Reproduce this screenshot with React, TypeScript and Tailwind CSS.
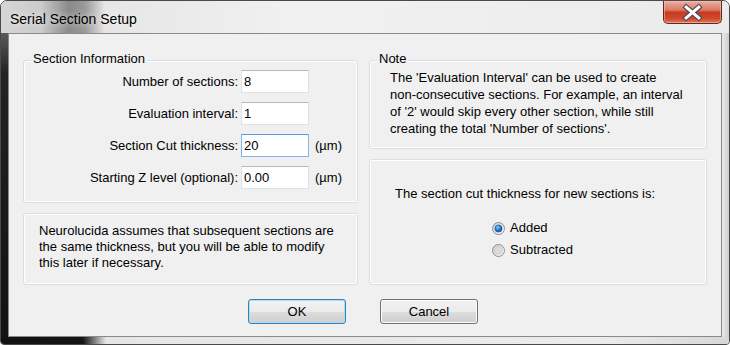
import type { ReactNode } from 'react';

function Group({ label, className, children }: { label?: string; className?: string; children?: ReactNode }) {
  return (
    <div className={`relative rounded-[3px] border border-[#d5dfe5] shadow-[inset_0_0_0_1px_#ffffff] ${className ?? ''}`}>
      {label && (
        <span className="absolute left-[7px] top-[-10px] bg-[#f0f0f0] px-[2px] leading-[15px]">{label}</span>
      )}
      {children}
    </div>
  );
}

function Field({ label, value, focused, unit }: { label: string; value: string; focused?: boolean; unit?: boolean }) {
  return (
    <div className="flex h-[23px] items-center">
      <span className="w-[214px] text-right leading-[15px]">{label}</span>
      <div
        className={`ml-[3px] flex h-[23px] w-[68px] items-center bg-white pl-[2px] ${
          focused ? 'border border-[#7eb4ea] border-t-[#569de5]' : 'border border-[#dde2e8] border-t-[#b5b9bf]'
        }`}
      >
        {value}
      </div>
      {unit && <span className="ml-[6px]">(µm)</span>}
    </div>
  );
}

function Radio({ checked, label }: { checked?: boolean; label: string }) {
  return (
    <div className="flex h-[22px] items-center gap-[5px]">
      <svg width="13" height="13" viewBox="0 0 13 13">
        <defs>
          <linearGradient id={`rb-${label}`} x1="0" y1="0" x2="1" y2="1">
            <stop offset="0" stopColor="#c9c9c9" />
            <stop offset="1" stopColor="#ffffff" />
          </linearGradient>
          <radialGradient id={`dot-${label}`} cx="0.4" cy="0.35" r="0.7">
            <stop offset="0" stopColor="#8fd3ff" />
            <stop offset="0.45" stopColor="#2a8ad8" />
            <stop offset="1" stopColor="#0c3f86" />
          </radialGradient>
        </defs>
        <circle cx="6.5" cy="6.5" r="6" fill={`url(#rb-${label})`} stroke="#8e8f8f" strokeWidth="1" />
        {checked ? (
          <circle cx="6.5" cy="6.5" r="3.6" fill={`url(#dot-${label})`} stroke="#1b4f8c" strokeWidth="0.6" />
        ) : (
          <circle cx="6.5" cy="6.5" r="3.8" fill="#dcdcdc" stroke="#c4c4c4" strokeWidth="0.6" />
        )}
      </svg>
      <span>{label}</span>
    </div>
  );
}

export default function App() {
  return (
    <div className="h-[345px] w-[730px] font-['Liberation_Sans',Arial,sans-serif] text-[13px] text-black">
      <div className="flex h-[345px] w-[730px] flex-col overflow-hidden rounded-t-[7px] rounded-b-[4px] border border-[#4a4a4a] bg-[#e6e6e6]">
        {/* Title bar */}
        <div className="flex h-[32px] items-start justify-between bg-[linear-gradient(90deg,#d6d6d6_0px,#cbcbcb_40px,#8a8a8a_68px,#9a9a9a_84px,#e6e6e6_104px,#f1f1f1_300px,#ebebeb_100%)]">
          <span className="ml-[9px] mt-[10px] text-[14px] leading-[16px] [text-shadow:0_0_6px_rgba(255,255,255,0.9)]">
            Serial Section Setup
          </span>
          <button className="mr-[7px] flex h-[23px] w-[59px] items-center justify-center rounded-b-[5px] border border-t-0 border-[#5b2a22] bg-[linear-gradient(180deg,#eab0a3_0%,#dd7a66_40%,#c63b22_52%,#cf4a2e_80%,#e2785a_100%)] shadow-[inset_0_0_0_1px_rgba(255,200,190,0.5)]">
            <svg width="59" height="23" viewBox="0 0 59 23">
              <g strokeLinecap="square">
                <path d="M23 6 L36 17 M36 6 L23 17" stroke="#474b55" strokeWidth="5.5" />
                <path d="M23 6 L36 17 M36 6 L23 17" stroke="#ffffff" strokeWidth="3.2" />
              </g>
            </svg>
          </button>
        </div>

        {/* Middle row: frame | client | frame */}
        <div className="flex h-[304px]">
          <div className="w-[7px] bg-[linear-gradient(180deg,#5a5a5a_0px,#232323_40px,#121212_100%)]" />
          <div className="flex w-[714px] flex-col border border-[#8a8a8a] bg-[#f0f0f0] px-[14px] pt-[26px]">
            <div className="grid grid-cols-[335px_338px] gap-x-[11px]">
              {/* Left column */}
              <div className="flex flex-col gap-[10px]">
                <Group label="Section Information" className="h-[143px]">
                  <div className="flex flex-col gap-[9px] pt-[9px]">
                    <Field label="Number of sections:" value="8" />
                    <Field label="Evaluation interval:" value="1" />
                    <Field label="Section Cut thickness:" value="20" focused unit />
                    <Field label="Starting Z level (optional):" value="0.00" unit />
                  </div>
                </Group>
                <Group className="h-[72px]">
                  <p className="whitespace-nowrap pl-[15px] pt-[9px] leading-[16px]">
                    Neurolucida assumes that subsequent sections are
                    <br />
                    the same thickness, but you will be able to modify
                    <br />
                    this later if necessary.
                  </p>
                </Group>
              </div>

              {/* Right column */}
              <div className="flex flex-col gap-[10px]">
                <Group label="Note" className="h-[89px]">
                  <p className="whitespace-nowrap pl-[20px] pt-[8px] leading-[17px]">
                    The 'Evaluation Interval' can be used to create
                    <br />
                    non-consecutive sections. For example, an interval
                    <br />
                    of '2' would skip every other section, while still
                    <br />
                    creating the total 'Number of sections'.
                  </p>
                </Group>
                <Group className="h-[126px]">
                  <div className="pl-[25px] pt-[26px]">
                    <p className="leading-[16px]">The section cut thickness for new sections is:</p>
                    <div className="ml-[97px] mt-[15px] flex flex-col">
                      <Radio checked label="Added" />
                      <Radio label="Subtracted" />
                    </div>
                  </div>
                </Group>
              </div>
            </div>

            {/* Buttons */}
            <div className="mt-[14px] flex gap-[34px] pl-[225px]">
              <button className="h-[25px] w-[98px] rounded-[3px] border border-[#3c7fb1] bg-[linear-gradient(180deg,#f2f2f2_0%,#ebebeb_50%,#dddddd_51%,#cfcfcf_100%)] shadow-[inset_0_0_0_1px_#a8def8]">
                OK
              </button>
              <button className="h-[25px] w-[98px] rounded-[3px] border border-[#707070] bg-[linear-gradient(180deg,#f2f2f2_0%,#ebebeb_50%,#dddddd_51%,#cfcfcf_100%)] shadow-[inset_0_0_0_1px_#fcfcfc]">
                Cancel
              </button>
            </div>
          </div>
          <div className="w-[7px] bg-[linear-gradient(90deg,#e9e9e9_0px,#d6dcd6_4px,#c9c9c9_100%)]" />
        </div>

        {/* Bottom frame */}
        <div className="h-[7px] bg-[linear-gradient(90deg,#121212_0px,#151515_82px,#e6e6e6_105px,#ececec_600px,#d8d8d8_100%)]" />
      </div>
    </div>
  );
}
